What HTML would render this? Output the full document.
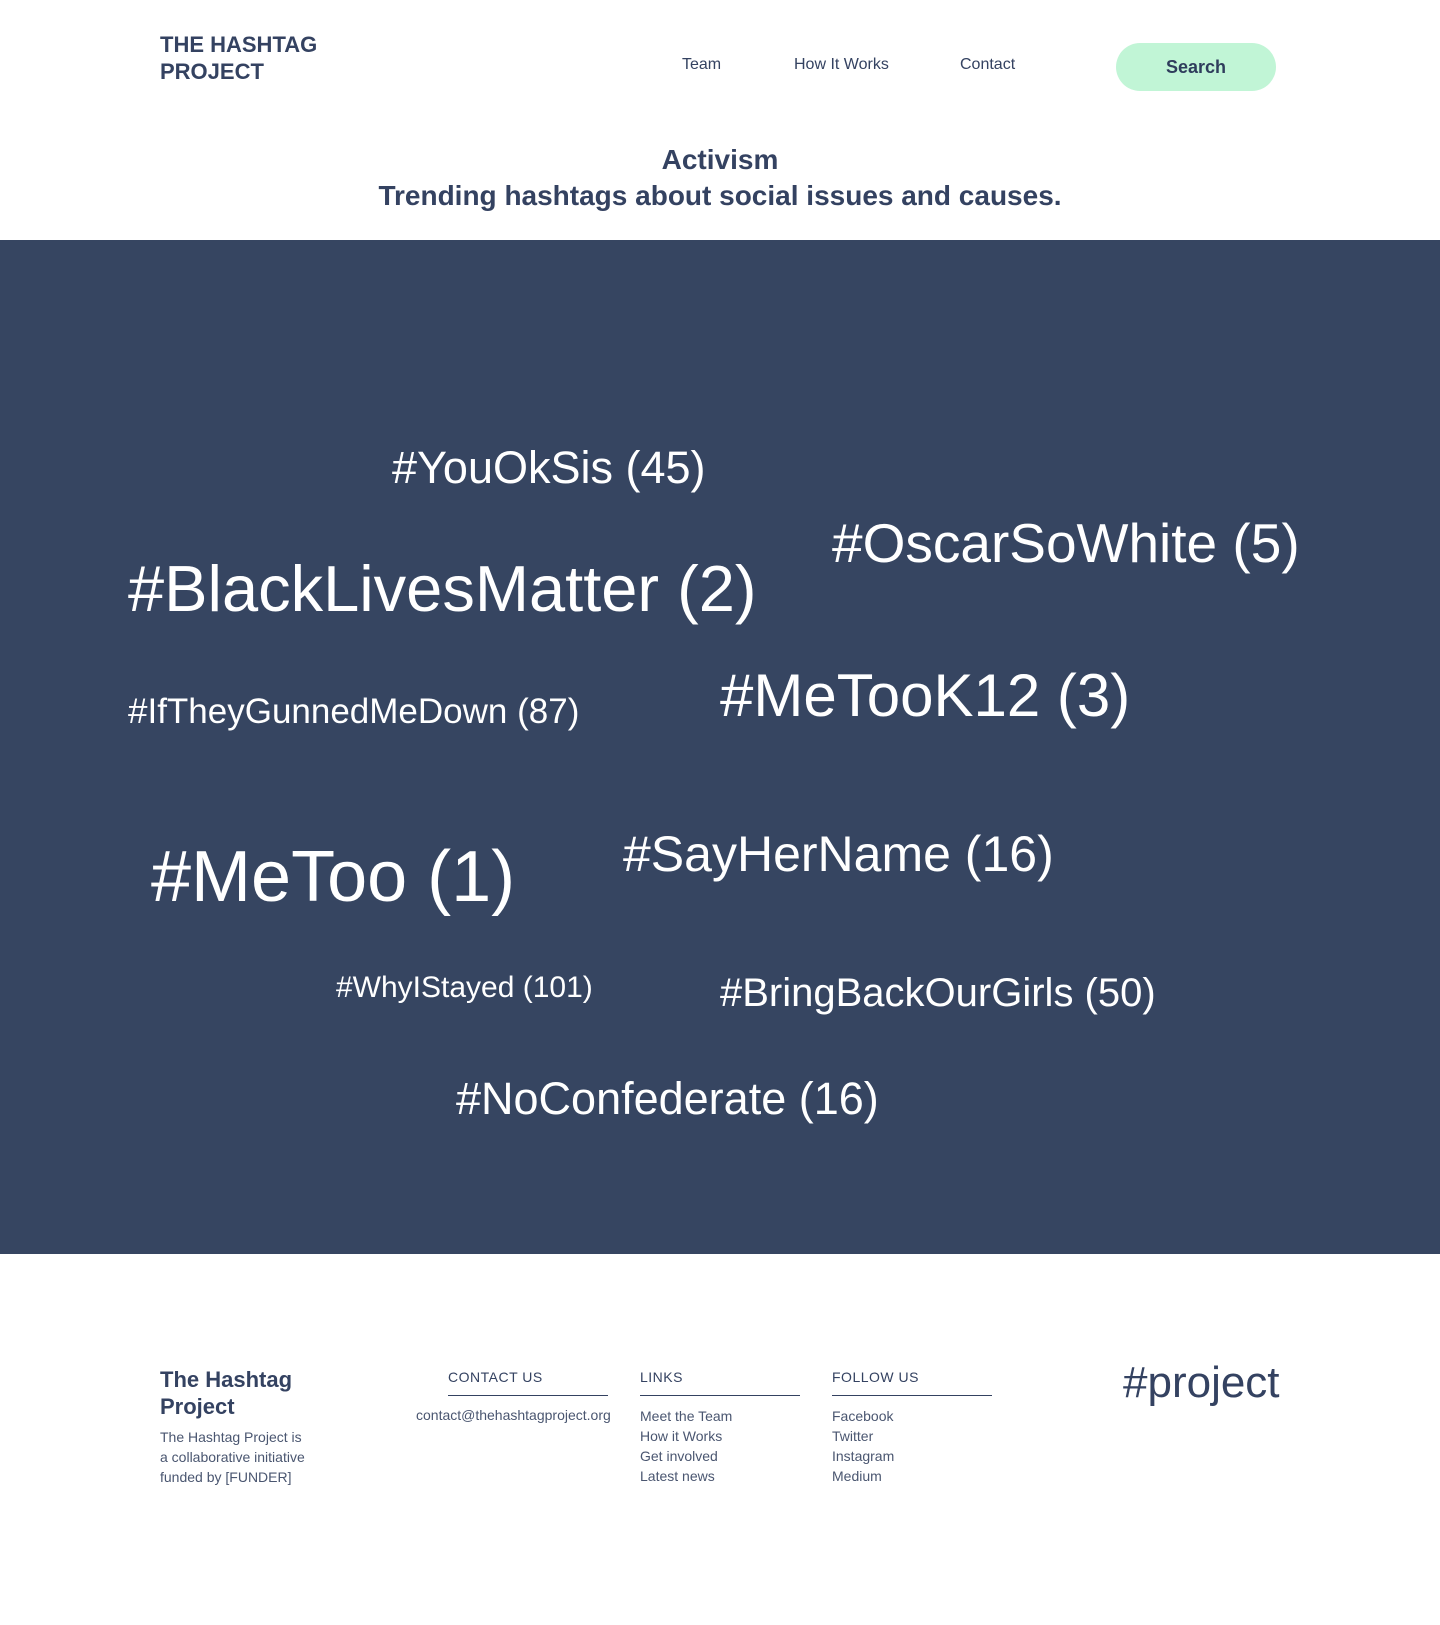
<!DOCTYPE html>
<html><head><meta charset="utf-8"><style>
*{margin:0;padding:0;box-sizing:border-box}
body{width:1440px;height:1625px;position:relative;background:#fff;font-family:"Liberation Sans",Arial,sans-serif;color:#344261;overflow:hidden}
.a{position:absolute;white-space:nowrap;line-height:1}
.logo{left:160px;top:31px;font-weight:bold;font-size:22px;line-height:27px}
.nav{top:57px;font-size:16px}
.btn{left:1116px;top:43px;width:160px;height:48px;border-radius:24px;background:#c1f5d6;font-weight:bold;font-size:18px;display:flex;align-items:center;justify-content:center;color:#2f3d5c}
.h{left:0;width:1440px;text-align:center;font-weight:bold;font-size:28px}
.band{position:absolute;left:0;top:240px;width:1440px;height:1014px;background:#364561}
.t{position:absolute;white-space:nowrap;color:#fff;line-height:1}
.fh{font-size:14px;letter-spacing:.5px}
.ul{position:absolute;height:1px;background:#344261;width:160px;top:1395px}
.f{font-size:14px;line-height:20px;color:#4a5670}
</style></head><body>
<div class="a logo">THE HASHTAG<br>PROJECT</div>
<div class="a nav" style="left:682px">Team</div>
<div class="a nav" style="left:794px">How It Works</div>
<div class="a nav" style="left:960px">Contact</div>
<div class="a btn">Search</div>
<div class="a h" style="top:146px">Activism</div>
<div class="a h" style="top:182px">Trending hashtags about social issues and causes.</div>
<div class="band">
<div class="t" style="left:392px;top:205px;font-size:45px">#YouOkSis (45)</div>
<div class="t" style="left:832px;top:276px;font-size:55px">#OscarSoWhite (5)</div>
<div class="t" style="left:128px;top:316px;font-size:65px">#BlackLivesMatter (2)</div>
<div class="t" style="left:128px;top:454px;font-size:35px">#IfTheyGunnedMeDown (87)</div>
<div class="t" style="left:720px;top:426px;font-size:60px">#MeTooK12 (3)</div>
<div class="t" style="left:151px;top:601px;font-size:72px">#MeToo (1)</div>
<div class="t" style="left:623px;top:589px;font-size:50px">#SayHerName (16)</div>
<div class="t" style="left:336px;top:733px;font-size:30px">#WhyIStayed (101)</div>
<div class="t" style="left:720px;top:733px;font-size:40px">#BringBackOurGirls (50)</div>
<div class="t" style="left:456px;top:836px;font-size:45px">#NoConfederate (16)</div>
</div>
<div class="a" style="left:160px;top:1366px;font-weight:bold;font-size:22px;line-height:27px">The Hashtag<br>Project</div>
<div class="a f" style="left:160px;top:1427px">The Hashtag Project is<br>a collaborative initiative<br>funded by [FUNDER]</div>
<div class="a fh" style="left:448px;top:1370px">CONTACT US</div>
<div class="a fh" style="left:640px;top:1370px">LINKS</div>
<div class="a fh" style="left:832px;top:1370px">FOLLOW US</div>
<div class="ul" style="left:448px"></div>
<div class="ul" style="left:640px"></div>
<div class="ul" style="left:832px"></div>
<div class="a f" style="left:416px;top:1405px">contact@thehashtagproject.org</div>
<div class="a f" style="left:640px;top:1406px">Meet the Team<br>How it Works<br>Get involved<br>Latest news</div>
<div class="a f" style="left:832px;top:1406px">Facebook<br>Twitter<br>Instagram<br>Medium</div>
<div class="a" style="left:1123px;top:1361px;font-size:44px">#project</div>
</body></html>
